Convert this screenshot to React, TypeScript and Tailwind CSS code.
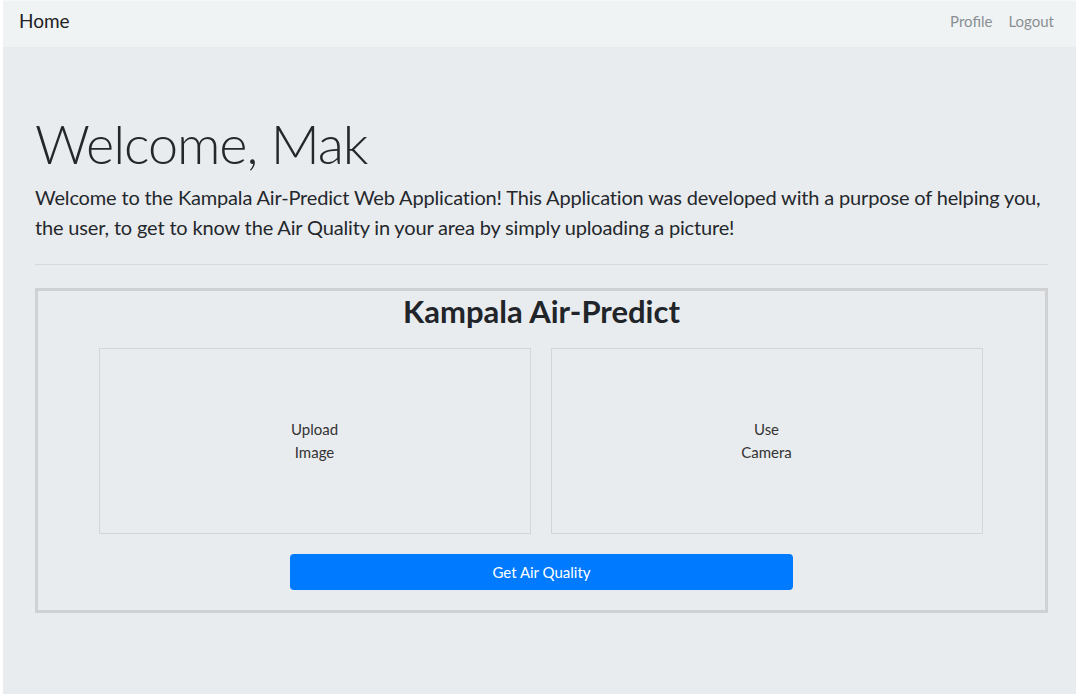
import { useState } from 'react';

const font = { fontFamily: 'Lato, "Open Sans", sans-serif' };

const Navbar = () => (
  <nav className="flex h-[47px] items-center justify-between border-t border-[#f6f8f9] bg-[#eff3f4] pb-[5px] pl-4 pr-[22px]">
    <a href="#" className="text-[19px] text-[#222]">
      Home
    </a>
    <div className="flex items-center gap-4 text-[15px] text-[#8a8f93]">
      <a href="#">Profile</a>
      <a href="#">Logout</a>
    </div>
  </nav>
);

const PickBox = ({ top, bottom }: { top: string; bottom: string }) => (
  <button className="flex h-[186px] w-[432px] flex-col items-center justify-center border border-[#d3d5d8] text-[15px] leading-[23px] text-[#333]">
    <span>{top}</span>
    <span>{bottom}</span>
  </button>
);

export default function App() {
  const [mode, setMode] = useState<'upload' | 'camera' | null>(null);

  return (
    <div className="flex min-h-[694px] flex-col bg-white pl-[3px] pr-[4px]" style={font}>
      <Navbar />
      <main className="flex-1 bg-[#e9ecef] pl-8 pr-[28px] pt-[63px]">
        <h1 className="text-[54px] leading-[67px] font-light tracking-[-0.02em] text-[#24282c]">Welcome, Mak</h1>
        <p className="mt-[5px] text-[20px] leading-[30px] tracking-[-0.008em] text-[#24282c]">
          <span className="block whitespace-nowrap">
            Welcome to the Kampala Air-Predict Web Application! This Application was developed with a purpose of helping you,
          </span>
          <span className="block whitespace-nowrap">
            the user, to get to know the Air Quality in your area by simply uploading a picture!
          </span>
        </p>
        <hr className="mt-[22px] border-t border-[#d5d8dc]" />

        <div className="mt-[23px] flex flex-col items-center border-[3px] border-[#cfd1d3] pb-[20px]">
          <h2 className="text-[31px] leading-[40px] font-bold text-[#212529]">Kampala Air-Predict</h2>
          <div className="mt-[17px] flex gap-5 pr-[2px]">
            <div onClick={() => setMode('upload')}>
              <PickBox top="Upload" bottom="Image" />
            </div>
            <div onClick={() => setMode('camera')}>
              <PickBox top="Use" bottom="Camera" />
            </div>
          </div>
          <button
            className="mt-[20px] h-[36px] w-[503px] rounded bg-[#007bff] text-[15px] text-white"
            data-mode={mode ?? ''}
          >
            Get Air Quality
          </button>
        </div>
      </main>
    </div>
  );
}
